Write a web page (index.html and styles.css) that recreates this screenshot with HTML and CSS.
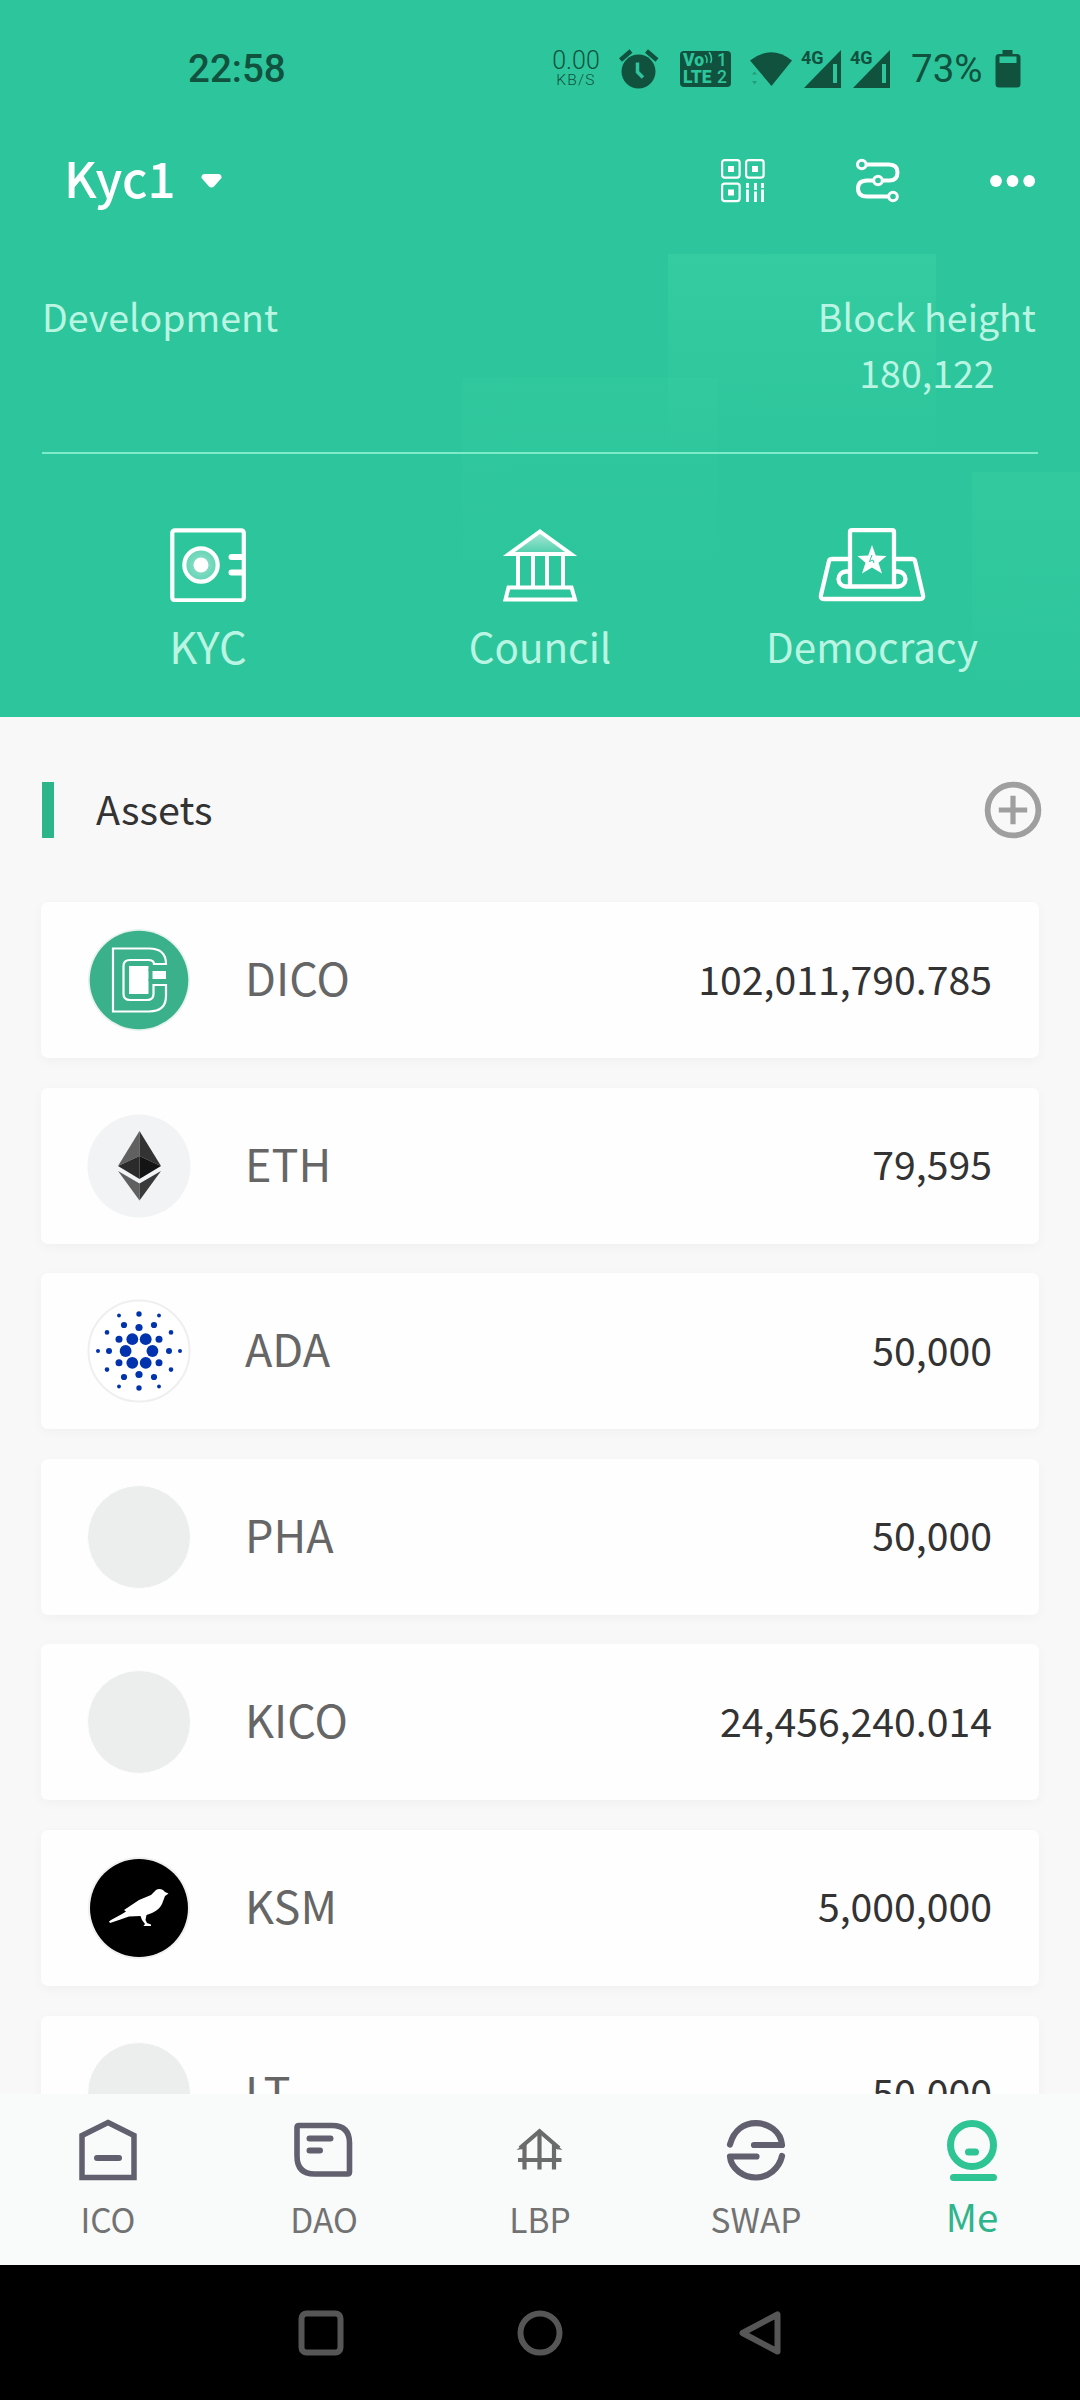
FILE: index.html
```html
<!DOCTYPE html>
<html lang="en">
<head>
<meta charset="utf-8">
<title>Wallet</title>
<link rel="stylesheet" href="styles.css">
</head>
<body>
<div class="screen">
  <header class="hero">
    <div class="status">
      <span class="clock">22:58</span>
      <span class="speed"><b>0.00</b><i>KB/S</i></span>
      <svg class="alarm" width="40" height="40" viewBox="0 0 40 40"><circle cx="19.5" cy="22.5" r="17" fill="currentColor"/><path d="M1.500 11 12 2M38 11 27.500 2" stroke="currentColor" stroke-width="4.500"/><path d="M18.500 13.500V23l5.500 5.500" fill="none" stroke="#2dc59b" stroke-width="3.500"/></svg>
      <span class="volte"><span>Vo<svg width="9" height="12" viewBox="0 0 9 12"><path d="M1 3q3 3 1.500 8M5 0q4 5 1.500 11" fill="none" stroke="currentColor" stroke-width="1.600"/></svg></span><em>1</em><span>LTE</span><em>2</em></span>
      <svg class="wifi" width="44" height="36" viewBox="0 0 44 36"><path d="M1 9.500Q22-7 43 9.500L22.500 35Z" fill="currentColor"/><path d="M3 23.500h5l-2.500-3zM3 30h5l-2.500 3.500z" fill="currentColor" opacity=".35"/></svg>
      <span class="cell"><b>4G</b><svg width="38" height="38" viewBox="0 0 38 38"><path d="M37 0V38H0Z" fill="currentColor"/><path d="M31 14v19" stroke="#2dc59b" stroke-width="4"/></svg></span>
      <span class="cell"><b>4G</b><svg width="38" height="38" viewBox="0 0 38 38"><path d="M37 0V38H0Z" fill="currentColor"/><path d="M31 14v19" stroke="#2dc59b" stroke-width="4"/></svg></span>
      <span class="percent">73%</span>
      <svg class="battery" width="26" height="38" viewBox="0 0 26 38"><path d="M7.500 0h10v4H22q3.500 0 3.500 3.500V34q0 3.500-3.500 3.500H4Q.500 37.500.500 34V7.500Q.500 4 4 4h3.500Z" fill="currentColor"/><path d="M4.500 6.500h17v6.500h-17z" fill="#2dc59b"/></svg>
    </div>

    <div class="account">
      <span class="account-name">Kyc1</span>
      <svg class="caret" width="21" height="14" viewBox="0 0 21 14"><path d="M3 0H18q3 .500 2.500 4L13 12.500q-2.500 2-5 0L.500 4Q0 .500 3 0Z" fill="#fff"/></svg>
      <svg class="act" width="46" height="46" viewBox="0 0 46 46" fill="none" stroke="#fff" stroke-width="2.200"><rect x="2.100" y="2.100" width="17.500" height="17.500" rx="2.500"/><rect x="26.100" y="2.100" width="17.500" height="17.500" rx="2.500"/><rect x="2.100" y="25.600" width="17.500" height="17.500" rx="2.500"/><path d="M8 8h6v6H8zM32 8h6v6h-6zM8 31.500h6v6H8z" fill="#fff" stroke="none"/><path d="M27.500 25v5M35.500 25v7M42.500 25v5M27.500 31.500V44M35.500 33.500V44M42.500 31.500V44" stroke-width="2.800"/></svg>
      <svg class="act" width="46" height="46" viewBox="0 0 46 46" fill="none" stroke="#fff" stroke-width="4"><path d="M11 6.500H34q8.500 0 8.500 8T34 22.500h-6M18 22.500h-6q-9 0-9 8t9 8H34"/><circle cx="6.800" cy="6.500" r="4.300" stroke-width="3"/><circle cx="23" cy="22.500" r="4.300" stroke-width="3"/><circle cx="38" cy="38.500" r="4.300" stroke-width="3"/></svg>
      <svg class="act dots" width="46" height="46" viewBox="0 0 46 46" fill="#fff"><circle cx="6" cy="23" r="5.900"/><circle cx="22.500" cy="23" r="5.900"/><circle cx="39.200" cy="23" r="5.900"/></svg>
    </div>

    <div class="info">
      <span>Development</span>
      <span class="block">Block height<br>180,122</span>
    </div>

    <div class="modules">
      <div class="module kyc">
        <svg width="78" height="74" viewBox="0 0 78 74"><defs><radialGradient id="lens"><stop offset="0" stop-color="#fff" stop-opacity=".5"/><stop offset="1" stop-color="#fff" stop-opacity=".25"/></radialGradient></defs><rect x="3.300" y="2.300" width="71.500" height="70" rx="2.500" fill="none" stroke="#fff" stroke-width="4.200"/><circle cx="32" cy="37" r="16.700" fill="url(#lens)" stroke="#fff" stroke-width="4.200"/><circle cx="32" cy="37" r="7.500" fill="#fff"/><path d="M73 26H62.500a3 3 0 0 0 0 6H73ZM73 41.500H62.500a3 3 0 0 0 0 6H73Z" fill="#fff"/></svg>
        <span>KYC</span>
      </div>
      <div class="module">
        <svg width="78" height="74" viewBox="0 0 78 74" fill="none" stroke="#fff" stroke-width="4"><defs><linearGradient id="roof" x2="0" y2="1"><stop offset="0" stop-color="#fff" stop-opacity=".6"/><stop offset="1" stop-color="#fff" stop-opacity=".15"/></linearGradient></defs><path d="M39 3.500 70 26H8Z" fill="url(#roof)"/><path d="M17 27V60M32 27V60M46 27V60M62 27V60M7.500 59.500H70.500L74 71.500H4.500Z"/></svg>
        <span>Council</span>
      </div>
      <div class="module">
        <svg width="108" height="74" viewBox="0 0 108 74" fill="none" stroke="#fff" stroke-width="4.300" stroke-linejoin="round"><path d="M31 31H14q-2.500 0-3 2L3 67q-1 4 3 4H102q4 0 3-4L97 33q-.500-2-3-2H77"/><path d="M31 43.500h-3a7.500 7.500 0 0 0 0 15H80a7.500 7.500 0 0 0 0-15h-3"/><path d="M32 58V4q0-1.800 1.800-1.800H74.200Q76 2.200 76 4V58"/><path d="m54 17 3.800 10.500 10.700.500-8 6.700 3.500 10.800L54 39.500l-10 6 3.500-10.800-8-6.700 10.700-.500z" fill="#fff" stroke="none"/><path d="m54 27-2.500 6.500 3.500-1.500 1 3" stroke="#2dc59b" stroke-width="1"/></svg>
        <span>Democracy</span>
      </div>
    </div>
  </header>

  <main class="assets">
    <div class="heading">
      <h2>Assets</h2>
      <svg width="58" height="58" viewBox="0 0 58 58" fill="none" stroke="#9f9f9f"><circle cx="29" cy="29" r="25.400" stroke-width="5.800"/><path d="M29 14.800V43.200M14.800 29H43.200" stroke-width="5.200"/></svg>
    </div>

    <div class="row">
      <svg class="coin" width="104" height="104" viewBox="-52 -52 104 104"><circle r="51" fill="#e8f2ee"/><circle r="49.300" fill="#3ab18a"/><path d="M-26-31.500H10Q27-31.500 27-16H15Q15-20 9-20H-9Q-15.500-20-15.500-14V14Q-15.500 20-9 20H8Q14.500 20 14.500 14V5H27V16Q27 31.500 10 31.500H-26Z" fill="none" stroke="#fff" stroke-width="2.200"/><path d="M-10-14H9.500V-9H27V-1H9.500V14H-10Z" fill="#fff"/><path d="M11.500-11V1" stroke="#3ab18a" stroke-width="4"/></svg>
      <span class="name">DICO</span><span class="amount">102,011,790.785</span>
    </div>
    <div class="row">
      <svg class="coin" width="104" height="104" viewBox="-52 -52 104 104"><circle r="51.500" fill="#f2f3f5"/><g transform="translate(.5)"><path d="M0-35-21.500 0 0-10Z" fill="#606060"/><path d="M0-35 21.500 0 0-10Z" fill="#333"/><path d="M-21.500 0 0-10V13Z" fill="#2b2b2b"/><path d="M21.500 0 0-10V13Z" fill="#141414"/><path d="M-21.500 5 0 17.500V34.500Z" fill="#606060"/><path d="M21.500 5 0 17.500V34.500Z" fill="#3a3a3a"/></g></svg>
      <span class="name">ETH</span><span class="amount">79,595</span>
    </div>
    <div class="row">
      <svg class="coin" width="104" height="104" viewBox="-52 -52 104 104" fill="#0033ad"><circle r="50.500" fill="#fff" stroke="#efefef" stroke-width="2"/><circle cx="-13.400" r="5.900"/><circle cx="13.400" r="5.900"/><circle cx="-6.700" cy="-11.800" r="5.900"/><circle cx="6.700" cy="-11.800" r="5.900"/><circle cx="-6.700" cy="11.800" r="5.900"/><circle cx="6.700" cy="11.800" r="5.900"/><circle cy="-23.500" r="3.600"/><circle cy="23.500" r="3.600"/><circle cx="-20" cy="-11.800" r="3.500"/><circle cx="20" cy="-11.800" r="3.500"/><circle cx="-20" cy="11.800" r="3.500"/><circle cx="20" cy="11.800" r="3.500"/><circle cx="-30" r="3"/><circle cx="30" r="3"/><circle cx="-15" cy="-26" r="3.100"/><circle cx="15" cy="-26" r="3.100"/><circle cx="-15" cy="26" r="3.100"/><circle cx="15" cy="26" r="3.100"/><circle cy="-37" r="2.700"/><circle cy="37" r="2.700"/><circle cx="-32" cy="-18.600" r="2.300"/><circle cx="32" cy="-18.600" r="2.300"/><circle cx="-32" cy="18.600" r="2.300"/><circle cx="32" cy="18.600" r="2.300"/><circle cx="-20" cy="-35.500" r="1.900"/><circle cx="20" cy="-35.500" r="1.900"/><circle cx="-20" cy="35.500" r="1.900"/><circle cx="20" cy="35.500" r="1.900"/><circle cx="-41" r="2"/><circle cx="41" r="2"/></svg>
      <span class="name">ADA</span><span class="amount">50,000</span>
    </div>
    <div class="row">
      <span class="coin blank"></span>
      <span class="name">PHA</span><span class="amount">50,000</span>
    </div>
    <div class="row">
      <span class="coin blank"></span>
      <span class="name">KICO</span><span class="amount">24,456,240.014</span>
    </div>
    <div class="row">
      <svg class="coin" width="104" height="104" viewBox="-52 -52 104 104"><circle r="51" fill="#f0f0f0"/><circle r="49" fill="#000"/><path d="M-30 13.500-28 12-17 6-13 3.500-15 2 0-8 12-13 17-18Q20-20 24-18L26-16 29.500-14.500 27.500-13 26-12 23-4Q20 2 13 5L7.500 7 6.500 12 8 15 12 16.500 12 18H4.500L6 16 3 12 1.500 8-10 8.500-20 12-29 15Z" fill="#fff"/></svg>
      <span class="name">KSM</span><span class="amount">5,000,000</span>
    </div>
    <div class="row">
      <span class="coin blank"></span>
      <span class="name">LT</span><span class="amount">50,000</span>
    </div>
  </main>

  <nav class="tabs">
    <a class="tab"><svg width="62" height="64" viewBox="0 0 62 64" fill="none" stroke="#62606e" stroke-width="5.500"><path d="M31 4.500 57 17.500V59.500H5V17.500Z"/><path d="M20 40H42" stroke-width="6" stroke-linecap="round"/></svg><span>ICO</span></a>
    <a class="tab"><svg width="62" height="64" viewBox="0 0 62 64" fill="none" stroke="#62606e" stroke-width="5.600"><path d="M6 7.500H39Q56.500 7.500 56.500 25V54Q56.500 56 54.500 56H21.500Q4 56 4 38V9.500Q4 7.500 6 7.500Z"/><path d="M16.500 20.500H37.500M16.500 32.500H27" stroke-width="6" stroke-linecap="round"/></svg><span>DAO</span></a>
    <a class="tab"><svg width="62" height="64" viewBox="0 0 62 64" fill="none" stroke="#6b6b6b" stroke-width="4.200"><path d="M11 30 30.500 13.200 50 30" /><path d="M15.500 26.500V51.500M30.500 14V51.500M45 26.500V51.500M9 42H52.500"/><path d="M7.500 32 17 24V30.500ZM53.500 32 44 24V30.500Z" fill="#6b6b6b" stroke="none"/></svg><span>LBP</span></a>
    <a class="tab"><svg width="62" height="64" viewBox="0 0 62 64" fill="none" stroke="#62606e" stroke-width="6.200" stroke-linecap="round" stroke-linejoin="round"><path d="M5 26.500C9 12 19 5.200 31 5.200S56 13 57 27H29"/><path d="M57 38C54 51 43 59.500 31 59.500S6 51 5 38.500H31.500"/></svg><span>SWAP</span></a>
    <a class="tab active"><svg width="62" height="64" viewBox="0 0 62 64" fill="none" stroke="#2fc494"><circle cx="31" cy="27" r="21.500" stroke-width="7"/><path d="M27.500 34h7M12.500 59.500H52.500" stroke-width="7" stroke-linecap="round"/></svg><span>Me</span></a>
  </nav>

  <div class="system">
    <svg width="48" height="48" viewBox="0 0 48 48" fill="none" stroke="#565656" stroke-width="6"><rect x="4.500" y="4.500" width="39" height="39" rx="5"/></svg>
    <svg width="48" height="48" viewBox="0 0 48 48" fill="none" stroke="#565656" stroke-width="6"><circle cx="24" cy="24" r="19.500"/></svg>
    <svg width="48" height="48" viewBox="0 0 48 48" fill="none" stroke="#565656" stroke-width="6" stroke-linejoin="round"><path d="M7.500 24 42.500 5.500V42.500Z"/></svg>
  </div>
</div>
</body>
</html>
```
FILE: styles.css
```css
* { box-sizing: border-box; }

body {
  margin: 0;
  background: #f8f8f8;
  font-family: "Noto Sans CJK SC", "Noto Sans", sans-serif;
}

svg { display: block; flex: none; }

.screen {
  display: flex;
  flex-direction: column;
  width: 1080px;
  height: 2400px;
  overflow: hidden;
}

/* green header */
.hero {
  height: 717px;
  flex: none;
  color: #b9f5e2;
  background:
    linear-gradient(rgba(70, 220, 175, .28), rgba(70, 220, 175, 0)) 668px 254px / 268px 200px no-repeat,
    linear-gradient(rgba(70, 220, 175, .1), rgba(70, 220, 175, 0)) 462px 378px / 256px 200px no-repeat,
    linear-gradient(rgba(70, 220, 175, .18), rgba(70, 220, 175, 0)) 972px 472px / 108px 220px no-repeat,
    #2dc59b;
}

.status {
  display: flex;
  align-items: center;
  height: 137px;
  padding-left: 188px;
  color: #11523f;
  font-family: Roboto, sans-serif;
}

.clock { width: 365px; font-size: 38.500px; font-weight: 500; }

.speed {
  display: flex;
  flex-direction: column;
  align-items: center;
  width: 46px;
  line-height: 1;
}
.speed b { font-size: 25px; font-weight: 300; line-height: 23px; }
.speed i { font-size: 15.500px; font-style: normal; font-weight: 300; letter-spacing: 1.200px; line-height: 16px; }

.alarm { margin-left: 20px; }

.volte {
  display: grid;
  grid-template-columns: auto auto;
  justify-content: space-between;
  width: 51px;
  height: 36px;
  margin-left: 21px;
  padding: 1px 4px 0 3px;
  border-radius: 4px;
  background: #11523f;
  color: #2dc59b;
  font-size: 17.500px;
  font-weight: 900;
  line-height: 17px;
}
.volte span { display: flex; }
.volte em { font-style: normal; font-weight: 500; }

.wifi { margin-left: 18px; }

.cell { position: relative; margin-left: 11px; }
.cell b {
  position: absolute;
  top: 0;
  left: -3px;
  font-size: 18px;
  font-weight: 700;
  line-height: 15px;
}

.percent { margin-left: 20px; width: 84px; font-size: 38.500px; font-weight: 400; }

.account { display: flex; align-items: center; height: 88px; padding-left: 64px; }
.account-name {
  width: 137px;
  margin-bottom: 8px;
  color: #fff;
  font-size: 49.300px;
  font-weight: 500;
  line-height: 60px;
}
.act { margin-left: 89px; }
.caret + .act { margin-left: 498px; }

.info {
  display: flex;
  justify-content: space-between;
  height: 229px;
  margin: 0 42px;
  padding-top: 63px;
  border-bottom: 2px solid #7deac9;
  font-size: 37.500px;
  line-height: 56px;
}
.block { text-align: center; padding-right: 2px; }

.modules { display: grid; grid-template-columns: repeat(3, 332px); margin: 0 42px; }
.module { display: flex; flex-direction: column; align-items: center; padding-top: 74px; }
.module span { margin-top: 14px; font-size: 40.400px; line-height: 60px; }
.kyc span { font-size: 43.500px; }

/* asset list */
.assets { height: 1377px; flex: none; padding: 0 41px; overflow: hidden; }

.heading { display: flex; align-items: center; height: 185px; padding-right: 0; }
.heading h2 {
  flex: 1;
  margin: 0 0 0 1px;
  border-left: 12px solid #2cb58a;
  padding: 0 0 4px 42px;
  color: #333;
  font-size: 39.500px;
  font-weight: 400;
  line-height: 52px;
}
.heading svg { margin-right: -3px; }

.row {
  display: flex;
  align-items: center;
  height: 156px;
  margin-bottom: 29.600px;
  padding: 0 47px 0 46px;
  border-radius: 7px;
  background: #fefefe;
  box-shadow: 0 3px 12px rgba(0, 20, 10, .035);
}

.coin { width: 104px; height: 104px; flex: none; }
.blank { border: 1px solid #fefefe; border-radius: 50%; background: #eceded; }

.name { margin: 0 auto 6px 54px; color: #666; font-size: 45px; line-height: 60px; }
.amount { margin-bottom: 5px; color: #333; font-size: 39.200px; line-height: 60px; }

/* tab bar */
.tabs { display: flex; height: 171px; flex: none; background: #f9fafa; }
.tab {
  display: flex;
  flex: 1;
  flex-direction: column;
  align-items: center;
  padding-top: 24px;
  color: #727272;
  font-size: 33.500px;
  line-height: 50px;
}
.tab span { margin-top: 12px; }
.active { color: #2fb58b; font-size: 38.500px; }
.active span { margin-top: 8px; }

/* system buttons */
.system {
  display: flex;
  flex: 1;
  align-items: center;
  justify-content: center;
  gap: 171px;
  background: #000;
}
```
